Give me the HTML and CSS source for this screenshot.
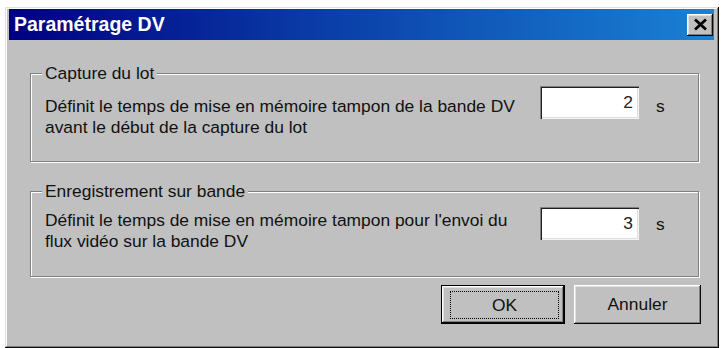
FILE: index.html
```html
<!DOCTYPE html>
<html lang="fr">
<head>
<meta charset="utf-8">
<title>Paramétrage DV</title>
<link rel="stylesheet" href="styles.css">
</head>
<body>
<div class="window">
  <div class="titlebar">
    <span class="title">Paramétrage DV</span>
    <button class="close" type="button" aria-label="Fermer">
      <svg width="15" height="13" viewBox="0 0 15 13"><path d="M2 1.5 L13 11.5 M13 1.5 L2 11.5" stroke="#000" stroke-width="2.8" fill="none"/></svg>
    </button>
  </div>
  <div class="body">
    <fieldset class="group g1">
      <legend>Capture du lot</legend>
      <div class="row">
        <p class="desc">Définit le temps de mise en mémoire tampon de la bande DV<br>avant le début de la capture du lot</p>
        <div class="field">2</div>
        <span class="unit">s</span>
      </div>
    </fieldset>
    <fieldset class="group g2">
      <legend>Enregistrement sur bande</legend>
      <div class="row">
        <p class="desc">Définit le temps de mise en mémoire tampon pour l'envoi du<br>flux vidéo sur la bande DV</p>
        <div class="field">3</div>
        <span class="unit">s</span>
      </div>
    </fieldset>
    <div class="buttons">
      <button class="btn btn-default" type="button"><span class="focus">OK</span></button>
      <button class="btn btn-cancel" type="button"><span class="label">Annuler</span></button>
    </div>
  </div>
</div>
</body>
</html>
```

FILE: styles.css
```css
html, body {
  margin: 0;
  background: #fff;
}

body {
  font-family: "Liberation Sans", Arial, sans-serif;
  color: #111;
}

.window {
  box-sizing: border-box;
  width: 714px;
  height: 341px;
  margin: 7px 0 0 5px;
  padding: 2px 5px 2px 4px;
  background: #c0c0c0;
  box-shadow:
    inset -1px -1px 0 #0a0a0a,
    inset 1px 1px 0 #dfdfdf,
    inset -2px -2px 0 #808080,
    inset 2px 2px 0 #fff;
}

.titlebar {
  box-sizing: border-box;
  height: 31px;
  display: flex;
  align-items: center;
  justify-content: space-between;
  padding: 0 1px 0 5px;
  background: linear-gradient(90deg, #000080 0%, #0a3ea8 45%, #1a82d4 100%);
}

.title {
  color: #fff;
  font-weight: bold;
  font-size: 19.5px;
  line-height: 31px;
}

.close {
  box-sizing: border-box;
  width: 26px;
  height: 22px;
  padding: 0;
  margin: 0;
  border: 0;
  background: #c0c0c0;
  display: flex;
  align-items: center;
  justify-content: center;
  box-shadow:
    inset -1px -1px 0 #0a0a0a,
    inset 1px 1px 0 #fff,
    inset -2px -2px 0 #808080,
    inset 2px 2px 0 #dfdfdf;
}

.body {
  padding: 23px 0 0 21px;
}

.group {
  box-sizing: border-box;
  width: 669px;
  min-width: 0;
  margin: 0;
  padding: 0 14px;
  border: 1px solid #808080;
  box-shadow: inset 1px 1px 0 #fff, 1px 1px 0 #fff;
  font-size: 17.4px;
}

.g1 {
  height: 99px;
}

.g2 {
  height: 96px;
  margin-top: 19px;
}

.group legend {
  padding: 0 3px;
  margin-left: -3px;
  line-height: 20px;
  font-size: 17.4px;
  background: #c0c0c0;
}

.row {
  display: flex;
  align-items: flex-start;
}

.desc {
  width: 495px;
  margin: 0;
  line-height: 21px;
  white-space: nowrap;
}

.field {
  box-sizing: border-box;
  width: 99px;
  height: 33px;
  padding-right: 6px;
  background: #fff;
  text-align: right;
  line-height: 33px;
  color: #222;
  box-shadow:
    inset 1px 1px 0 #808080,
    inset 2px 2px 0 #202020,
    inset -1px -1px 0 #f4f4f4,
    inset -2px -2px 0 #dfdfdf;
}

.unit {
  margin-left: 17px;
  line-height: 21px;
}

.g1 .desc { margin-top: 13px; }
.g1 .field { margin-top: 3px; }
.g1 .unit { margin-top: 13px; }

.g2 .desc { margin-top: 9px; }
.g2 .field { margin-top: 6px; }
.g2 .unit { margin-top: 13px; }

.buttons {
  width: 671px;
  margin-top: 8px;
  display: flex;
  justify-content: flex-end;
  gap: 9px;
}

.btn {
  box-sizing: border-box;
  height: 39px;
  margin: 0;
  border: 0;
  background: #c0c0c0;
  font-family: "Liberation Sans", Arial, sans-serif;
  font-size: 17.4px;
  color: #111;
  display: flex;
  align-items: stretch;
}

.btn-cancel {
  width: 127px;
  padding: 0;
  justify-content: center;
  align-items: center;
  box-shadow:
    inset -1px -1px 0 #0a0a0a,
    inset 1px 1px 0 #fff,
    inset -2px -2px 0 #808080,
    inset 2px 2px 0 #dfdfdf;
}

.btn-default {
  width: 124px;
  padding: 5px 5px 4px 8px;
  border: 1px solid #000;
  box-shadow:
    inset -1px -1px 0 #0a0a0a,
    inset 1px 1px 0 #fff,
    inset -2px -2px 0 #808080,
    inset 2px 2px 0 #dfdfdf;
}

.focus {
  flex: 1;
  border: 1px dotted #000;
  display: flex;
  align-items: center;
  justify-content: center;
}
```
